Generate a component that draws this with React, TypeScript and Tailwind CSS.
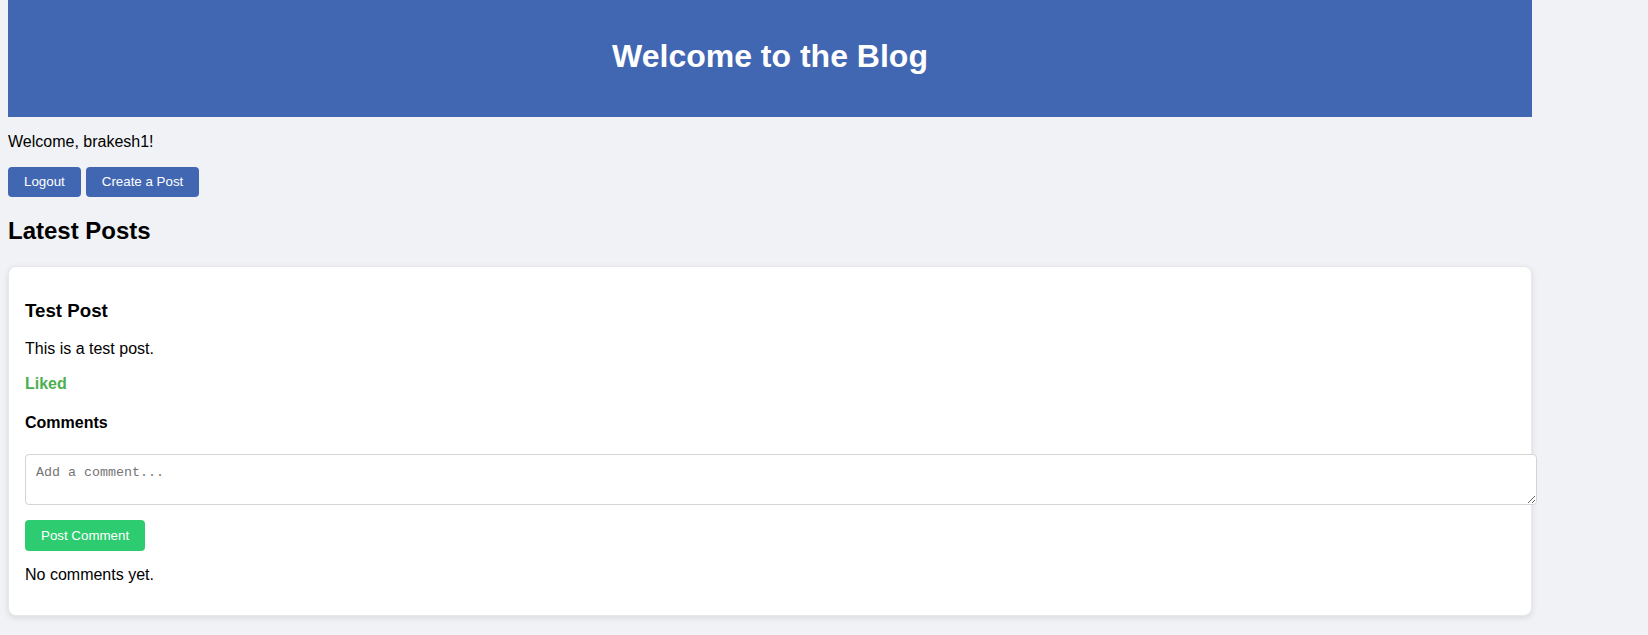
export default function App() {
    return (
        <div className="min-h-screen bg-[#f0f2f5] font-['Liberation_Sans',Arial,sans-serif] text-black">
            <div className="ml-2 w-[1524px]">
                <header className="h-[117px] bg-[#4267b2] pt-[38px] text-center text-white">
                    <h1 className="text-[32px] font-bold leading-[36.8px]">Welcome to the Blog</h1>
                </header>

                <p className="mt-4 text-base leading-[18.4px]">Welcome, brakesh1!</p>

                <div className="mt-4 flex gap-[5px]">
                    <button className="flex h-[30px] items-center rounded bg-[#4267b2] px-4 text-[13.33px] text-white">
                        Logout
                    </button>
                    <button className="flex h-[30px] items-center rounded bg-[#4267b2] px-4 text-[13.33px] text-white">
                        Create a Post
                    </button>
                </div>

                <h2 className="mt-5 text-2xl font-bold leading-[27.6px]">Latest Posts</h2>

                {/* post card */}
                <div className="mt-[21px] rounded-lg border border-[#e6e8eb] bg-white px-4 pt-4 pb-4 shadow-[0_2px_6px_rgba(0,0,0,0.1)]">
                    <h3 className="mt-[17px] text-[18.72px] font-bold leading-[21.5px]">Test Post</h3>
                    <p className="mt-[18.72px] leading-[18.4px]">This is a test post.</p>
                    <p className="mt-4 font-bold leading-[18.4px] text-[#4caf50]">Liked</p>

                    <h4 className="mt-[21px] font-bold leading-[18.4px]">Comments</h4>
                    <textarea
                        placeholder="Add a comment..."
                        className="mt-[22px] block h-[51px] w-[1512px] rounded border border-[#d4d4d4] bg-white px-[10px] py-[8px] font-['Liberation_Mono',monospace] text-[13.33px] placeholder:text-[#757575]"
                    />
                    <button className="mt-[15px] flex h-[31px] items-center rounded bg-[#2ecc71] px-4 text-[13.33px] text-white">
                        Post Comment
                    </button>
                    <p className="mt-[15px] mb-[14px] leading-[18.4px]">No comments yet.</p>
                </div>
            </div>
        </div>
    )
}
